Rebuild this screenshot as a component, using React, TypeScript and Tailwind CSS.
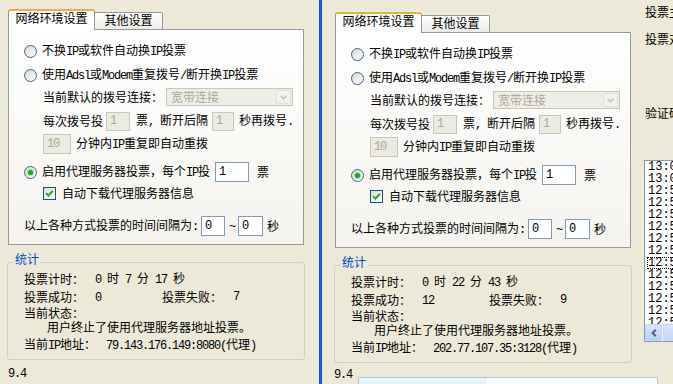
import React from "react";

const M = ({ children }: { children: React.ReactNode }) => (
  <span className="font-['Liberation_Mono',monospace] text-[12px] tracking-[-1.2px]">{children}</span>
);

function Radio({ checked }: { checked?: boolean }) {
  return (
    <span className="flex h-[13px] w-[13px] shrink-0 items-center justify-center rounded-full border border-[#3a6591] bg-gradient-to-br from-[#d8d8d2] to-white">
      {checked && <span className="h-[5px] w-[5px] rounded-full bg-[#22a322] shadow-[0_0_1px_1px_#9ee49e]" />}
    </span>
  );
}

function Check() {
  return (
    <span className="flex h-[13px] w-[13px] shrink-0 items-center justify-center border border-[#1c5180] bg-gradient-to-br from-[#dcdcd7] to-white">
      <svg width="9" height="9" viewBox="0 0 9 9">
        <path d="M1.2 4.2 L3.4 6.6 L7.8 1.8" stroke="#21a121" strokeWidth="1.9" fill="none" />
      </svg>
    </span>
  );
}

function Field({ className, value, disabled }: { className: string; value: string; disabled?: boolean }) {
  return (
    <div
      className={`flex shrink-0 items-center border pl-[3px] ${
        disabled ? "border-[#c9c7ba] bg-[#ecebe1] text-[#aca899]" : "border-[#7f9db9] bg-white text-black"
      } ${className}`}
    >
      <M>{value}</M>
    </div>
  );
}

function Combo() {
  return (
    <div className="ml-[3px] flex h-[18px] w-[127px] shrink-0 items-center border border-[#c9c7ba] bg-[#efeee6] pl-[4px]">
      <span className="flex-1 text-[#aca899]">宽带连接</span>
      <div className="mr-[1px] flex h-[14px] w-[15px] items-center justify-center rounded-[1px] border border-[#e2e0d6] bg-[#f3f2ec]">
        <svg width="7" height="5" viewBox="0 0 7 5">
          <path d="M0.6 0.8 L3.5 3.7 L6.4 0.8" stroke="#c3c1b4" strokeWidth="1.5" fill="none" />
        </svg>
      </div>
    </div>
  );
}

function Tabs() {
  return (
    <div className="relative z-10 ml-[1px] flex h-[21px] items-end">
      <div className="flex h-[21px] w-[87px] items-start justify-center rounded-t-[3px] border-x border-t-2 border-x-[#919b9c] border-t-[#f2ae3a] bg-white">
        网络环境设置
      </div>
      <div className="mb-[1px] flex h-[17px] w-[68px] items-start justify-center rounded-tr-[2px] border-r border-t border-[#919b9c] bg-gradient-to-b from-white to-[#ecebe6]">
        其他设置
      </div>
    </div>
  );
}

function Body() {
  return (
    <div className="-mt-[1px] ml-[1px] flex h-[216px] w-[296px] flex-col border border-[#919b9c] bg-gradient-to-b from-white to-[#f4f3ee] pl-[15px] pt-[11px]">
      <div className="flex h-[20px] items-center">
        <Radio />
        <span className="ml-[5px]">
          不换<M>IP</M>或软件自动换<M>IP</M>投票
        </span>
      </div>
      <div className="mt-[4px] flex h-[20px] items-center">
        <Radio />
        <span className="ml-[5px]">
          使用<M>Adsl</M>或<M>Modem</M>重复拨号<M>/</M>断开换<M>IP</M>投票
        </span>
      </div>
      <div className="mt-[2px] flex h-[20px] items-center pl-[19px]">
        <span>当前默认的拨号连接：</span>
        <Combo />
      </div>
      <div className="mt-[4px] flex h-[20px] items-center pl-[19px]">
        <span>每次拨号投</span>
        <Field className="ml-[3px] h-[19px] w-[24px]" value="1" disabled />
        <span className="ml-[6px]">
          票<M>, </M>断开后隔
        </span>
        <Field className="ml-[4px] h-[19px] w-[22px]" value="1" disabled />
        <span className="ml-[5px]">
          秒再拨号<M>.</M>
        </span>
      </div>
      <div className="mt-[3px] flex h-[20px] items-center pl-[19px]">
        <Field className="h-[20px] w-[28px]" value="10" disabled />
        <span className="ml-[5px]">
          分钟内<M>IP</M>重复即自动重拨
        </span>
      </div>
      <div className="mt-[8px] flex h-[20px] items-center">
        <Radio checked />
        <span className="ml-[5px]">
          启用代理服务器投票，每个<M>IP</M>投
        </span>
        <Field className="ml-[5px] h-[20px] w-[34px]" value="1" />
        <span className="ml-[8px]">票</span>
      </div>
      <div className="mt-[1px] flex h-[20px] items-center pl-[19px]">
        <Check />
        <span className="ml-[6px]">自动下载代理服务器信息</span>
      </div>
      <div className="mt-[13px] flex h-[20px] items-center">
        <span>
          以上各种方式投票的时间间隔为<M>:</M>
        </span>
        <Field className="ml-[3px] h-[20px] w-[24px]" value="0" />
        <span className="ml-[4px]">
          <M>~</M>
        </span>
        <Field className="ml-[3px] h-[20px] w-[25px]" value="0" />
        <span className="ml-[4px]">秒</span>
      </div>
    </div>
  );
}

function Stats({ time, ok, fail, ip }: { time: React.ReactNode; ok: string; fail: string; ip: string }) {
  return (
    <fieldset className="mt-[7px] w-[298px] rounded-[3px] border border-[#d0d0bf] px-0 pb-[7px] pt-0">
      <legend className="ml-[5px] px-[2px] pb-[6px] leading-[14px] text-[#0046d5]">统计</legend>
      <div className="flex flex-col pl-[16px]">
        <div className="flex h-[14px] items-center">
          <span className="w-[71px] shrink-0">投票计时：</span>
          <span>{time}</span>
        </div>
        <div className="mt-[4px] flex h-[14px] items-center">
          <span className="w-[71px] shrink-0">投票成功：</span>
          <span className="w-[67px] shrink-0">
            <M>{ok}</M>
          </span>
          <span className="w-[71px] shrink-0">投票失败：</span>
          <M>{fail}</M>
        </div>
        <div className="mt-[2px] flex h-[14px] items-center">当前状态：</div>
        <div className="flex h-[14px] items-center pl-[23px]">用户终止了使用代理服务器地址投票。</div>
        <div className="mt-[4px] flex h-[14px] items-center">
          <span className="w-[82px] shrink-0">
            当前<M>IP</M>地址：
          </span>
          <span>
            <M>{ip}(</M>代理<M>)</M>
          </span>
        </div>
      </div>
    </fieldset>
  );
}

const logs = [
  "13:01:36 投票成功",
  "13:00:52 投票成功",
  "12:59:47 投票失败",
  "12:59:10 投票成功",
  "12:58:33 投票成功",
  "12:57:58 投票失败",
  "12:57:21 投票成功",
  "12:56:40 投票成功",
  "12:56:02 投票失败",
  "12:55:29 投票成功",
  "12:54:51 投票成功",
  "12:54:13 投票失败",
  "12:53:38 投票成功",
  "12:52:59 投票成功",
];

function Side() {
  return (
    <div className="flex w-[200px] shrink-0 flex-col pl-[4px] pt-[5px]">
      <span className="ml-[1px]">投票主题：</span>
      <span className="ml-[1px] mt-[13px]">投票对象：</span>
      <span className="ml-[1px] mt-[60px]">验证码：</span>
      <div className="mt-[40px] flex h-[182px] w-[150px] flex-col border border-[#7f9db9] bg-white">
        <div className="flex flex-1 flex-col overflow-hidden pl-[2px] font-['Liberation_Mono',monospace] text-[12px] leading-[12px]">
          {logs.map((l, i) => (
            <div
              key={i}
              className={`h-[12px] shrink-0 pl-[1px] ${i === 8 ? "outline-1 -outline-offset-1 outline-dotted outline-black" : ""}`}
            >
              {l}
            </div>
          ))}
        </div>
        <div className="flex h-[17px] shrink-0 bg-[#f4f3ee]">
          <div className="flex h-[17px] w-[17px] items-center justify-center rounded-[2px] border border-[#c3d3fd] bg-gradient-to-b from-[#dbe6fd] to-[#b9cdf6]">
            <svg width="6" height="8" viewBox="0 0 6 8">
              <path d="M4.8 0.8 L1.6 4 L4.8 7.2" stroke="#4d6185" strokeWidth="2" fill="none" />
            </svg>
          </div>
          <div className="ml-[1px] h-[17px] w-[60px] rounded-[2px] border border-[#c3d3fd] bg-gradient-to-b from-[#dbe6fd] to-[#c4d6fa]" />
        </div>
      </div>
    </div>
  );
}

export default function App() {
  return (
    <div className="flex h-[384px] w-[673px] overflow-hidden whitespace-nowrap bg-[#ece9d8] font-['Noto_Sans_CJK_SC',sans-serif] text-[12px] leading-[14px] text-black">
      <div className="flex w-[319px] shrink-0 flex-col pl-[7px] pt-[9px]">
        <Tabs />
        <Body />
        <Stats
          time={
            <>
              <M>0 </M>时<M> 7 </M>分<M> 17 </M>秒
            </>
          }
          ok="0"
          fail="7"
          ip="79.143.176.149:8080"
        />
        <div className="ml-[1px] mt-[5px]">
          <M>9.4</M>
        </div>
      </div>
      <div className="w-[3px] shrink-0 bg-gradient-to-r from-[#0b3fcc] via-[#2164e6] to-[#0b3fcc]" />
      <div className="flex shrink-0 flex-col">
        <div className="flex">
          <div className="flex w-[318px] shrink-0 flex-col pl-[12px] pt-[12px]">
            <Tabs />
            <Body />
            <Stats
              time={
                <>
                  <M>0 </M>时<M> 22 </M>分<M> 43 </M>秒
                </>
              }
              ok="12"
              fail="9"
              ip="202.77.107.35:3128"
            />
          </div>
          <Side />
        </div>
        <div className="mt-[5px] flex items-start pl-[12px]">
          <M>9.4</M>
          <div className="ml-[6px] mt-[9px] flex h-[20px] w-[300px] shrink-0 border border-[#a7c6df] bg-white">
            <div className="h-full w-[128px] bg-gradient-to-b from-[#eef7fd] to-[#cfe6f5]" />
          </div>
        </div>
      </div>
    </div>
  );
}
